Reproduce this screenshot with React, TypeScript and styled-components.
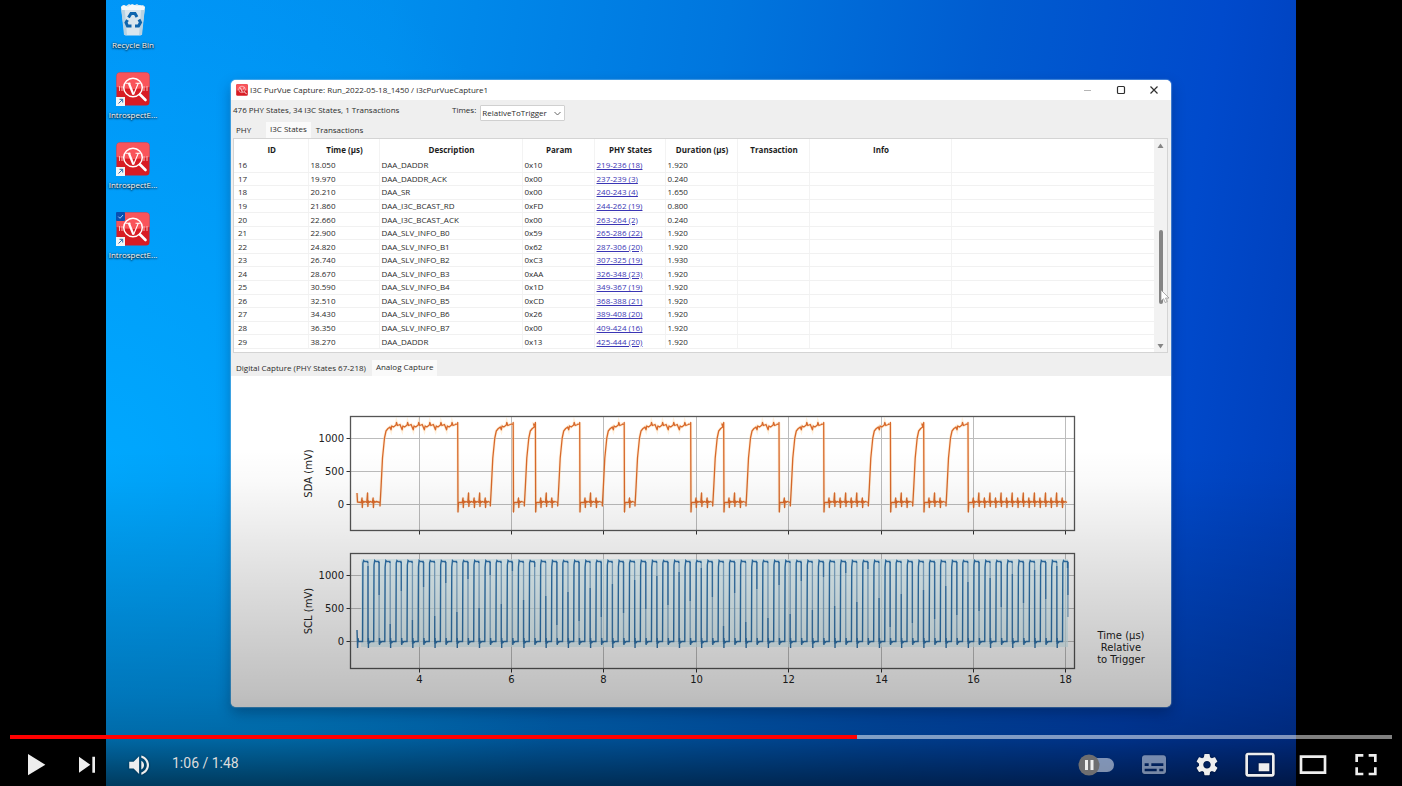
import React, { useState } from "react";
import styled, { createGlobalStyle } from "styled-components";

const GlobalStyle = createGlobalStyle`
  *, *::before, *::after { box-sizing: border-box; }
  body { margin: 0; background: #000; }
  button, select, input { font: inherit; color: inherit; margin: 0; }
`;

/* ---------- Player ---------- */

const Player = styled.main`
  position: relative;
  min-height: 100vh;
  padding: 0 106px;
  background: #000;
  overflow: hidden;
  display: flex;
`;

const Desktop = styled.div`
  flex: 1;
  min-width: 0;
  display: grid;
  grid-template-columns: 54px minmax(0, 1fr);
  column-gap: 71px;
  align-items: start;
  padding-right: 125px;
  background:
    radial-gradient(ellipse 42% 75% at 0% 60%, rgba(0, 170, 255, 0.9), rgba(0, 160, 255, 0) 100%),
    linear-gradient(98deg, #0092f6 0%, #008eee 22%, #0076de 48%, #005cd0 68%, #004acc 86%, #003cb6 100%);
  font: 8px/12px "Open Sans", "Noto Sans", sans-serif;
  color: #2b2b2b;
`;

const Shade = styled.div`
  position: absolute;
  inset: auto 0 0 0;
  height: 336px;
  pointer-events: none;
  background: linear-gradient(
    to bottom,
    rgba(0, 0, 0, 0) 0%,
    rgba(0, 0, 0, 0.02) 9%,
    rgba(0, 0, 0, 0.09) 28%,
    rgba(0, 0, 0, 0.17) 50%,
    rgba(0, 0, 0, 0.25) 73%,
    rgba(0, 0, 0, 0.32) 85%,
    rgba(0, 0, 0, 0.62) 100%
  );
`;

/* ---------- Desktop shortcuts ---------- */

const Shortcuts = styled.nav`
  display: flex;
  flex-direction: column;
`;

const Shortcut = styled.button`
  height: 70px;
  padding: 1px 0 0;
  border: 0;
  background: none;
  display: flex;
  flex-direction: column;
  align-items: center;
  gap: 2px;
  color: #fff;
  white-space: nowrap;
  text-shadow: 0 1px 2px #000, 0 0 2px rgba(0, 0, 0, 0.8);
  svg { display: block; }
`;

const AppGlyph = () => (
  <>
    <rect x="0.5" y="0.5" width="33" height="33" rx="3.5" fill="#d81c24" />
    <path d="M.5 4a3.500 3.500 0 0 1 3.500-3.500h26a3.500 3.500 0 0 1 3.500 3.500v11q-16 4-33 0z" fill="#f9545a" />
    <g stroke="#f7b9b9" strokeWidth="1" fill="none">
      <path d="M3.500 14v5M6 14v5M28 14v5M31 14v5" />
    </g>
    <circle cx="17" cy="15.500" r="9.300" fill="none" stroke="#fff" strokeWidth="1.500" />
    <path d="M9.500 11.200h5M19.500 11.200h5M22.300 11.200l-4.800 11.500" fill="none" stroke="#fff" strokeWidth="1.100" />
    <path d="M12.800 11l4.600 11.500" stroke="#fff" strokeWidth="2.200" />
    <path d="M24 22.500l5.500 5.500" stroke="#fff" strokeWidth="2.600" strokeLinecap="round" />
  </>
);

const AppShortcutIcon = ({ selected }: { selected?: boolean }) => (
  <svg width="36" height="36" viewBox="-1 -1 36 36" aria-hidden="true">
    <AppGlyph />
    <rect x="0" y="25" width="9" height="9" fill="#f4f6f8" />
    <path d="M2.500 31.500l4-4M3.500 27.300h3.200v3.200" stroke="#2a6cb0" fill="none" />
    {selected && (
      <>
        <rect x="0" y="0" width="9" height="9" rx="1" fill="#0a4fb0" />
        <path d="M2.300 4.600l1.700 1.700 3-3.300" stroke="#9fd0ff" fill="none" />
      </>
    )}
  </svg>
);

const BinIcon = () => (
  <svg width="36" height="36" viewBox="0 0 36 36" aria-hidden="true">
    <path d="M6 6l2-2 3 1 3-2 4 2 4-2 3 2 3-1 2 2-3.500 27.500q-.200 1-1.500 1h-14q-1.300 0-1.500-1z" fill="#d9e6ee" />
    <path d="M6 6l3 28h3L9.500 5zM30 6l-3 28h-3l2.500-29z" fill="#b8d2e2" />
    <path d="M6 6l3-2 4 2 4-3 5 2 3-1 5 2-1 3H7z" fill="#f5f9fb" />
    <g fill="none" stroke="#0e65ae" strokeWidth="3">
      <path d="M13.500 16.500l2.500-4h4l2 3.500" />
      <path d="M24 18.500l1.500 3-2 3.500H20" />
      <path d="M16.500 25h-4l-1.500-3.500 1.500-2.500" />
    </g>
  </svg>
);

/* ---------- Application window ---------- */

const AppWindow = styled.section`
  margin-top: 80px;
  min-width: 0;
  border-radius: 5px;
  overflow: hidden;
  background: #efefef;
  box-shadow: 0 0 1px 1px rgba(150, 200, 240, 0.45), 0 6px 14px rgba(0, 20, 60, 0.35);
`;

const TitleBar = styled.header`
  height: 20px;
  padding: 0 10px 0 5px;
  display: flex;
  align-items: center;
  gap: 2px;
  background: #fff;
  h1 { margin: 0; flex: 1; font: inherit; }
`;

const CaptionButton = styled.button<{ $faded?: boolean }>`
  width: 14px;
  height: 14px;
  margin-left: 17px;
  padding: 0;
  border: 0;
  background: none;
  color: ${(p) => (p.$faded ? "#b5b5b5" : "#2f2f2f")};
  svg { display: block; }
`;

const ToolRow = styled.div`
  height: 21px;
  display: flex;
  align-items: flex-start;
  padding: 4px 0 0 2px;
`;

const Summary = styled.span`
  width: 219px;
  white-space: nowrap;
`;

const TimesLabel = styled.label`
  display: flex;
  gap: 4px;
  white-space: nowrap;
`;

const SelectBox = styled.span`
  position: relative;
  display: block;
  width: 85px;
  height: 16px;
  margin-top: 1px;
  select {
    appearance: none;
    width: 100%;
    height: 100%;
    padding: 0 14px 0 1px;
    border: 1px solid #d0d0d0;
    border-radius: 1px;
    background: #fff;
  }
  svg { position: absolute; right: 4px; top: 6px; pointer-events: none; }
`;

const TabRow = styled.div<{ $height: number; $gap: number }>`
  height: ${(p) => p.$height}px;
  display: flex;
  align-items: flex-end;
  gap: ${(p) => p.$gap}px;
  padding-left: 2px;
`;

const Tab = styled.button<{ $active?: boolean }>`
  height: 16px;
  min-width: 31px;
  padding: ${(p) => (p.$active ? "0 4px 2px" : "0 3px")};
  border: 0;
  background: ${(p) => (p.$active ? "#fafafa" : "transparent")};
  line-height: 14px;
  text-align: left;
  white-space: nowrap;
`;

const Pane = styled.div`
  margin: 0 3px 0 2px;
  height: 215px;
  display: flex;
  align-items: stretch;
  border: 1px solid #d4d4d4;
  background: #fff;
`;

const StateTable = styled.table`
  flex: 1;
  align-self: flex-start;
  min-width: 0;
  height: 210px;
  table-layout: fixed;
  border-collapse: collapse;
  line-height: 12px;
  th, td { padding: 0 0 0 2px; border-right: 1px solid #f3f3f3; white-space: nowrap; }
  th { height: 20px; font-weight: 700; color: #1c1c1c; padding-top: 2px; }
  td { border-bottom: 1px solid #f1f1f1; text-align: left; }
  td:first-child { padding-left: 4px; }
  th:last-child, td:last-child { border-right: 0; }
  a { color: #3a35b4; }
`;

const ScrollTrack = styled.div`
  width: 13px;
  display: flex;
  flex-direction: column;
  align-items: center;
  padding: 4px 0 3px;
  background: #f2f2f2;
  svg { display: block; }
`;

const ScrollThumb = styled.div`
  width: 4px;
  height: 74px;
  margin: 81px 0 auto;
  border-radius: 2px;
  background: #858585;
`;

const TableArea = styled.div`
  position: relative;
`;

const Pointer = styled.svg`
  position: absolute;
  right: 1px;
  top: 151px;
`;

const Plot = styled.svg`
  display: block;
  width: 100%;
  height: auto;
  background: #fff;
  font: 10px "DejaVu Sans", sans-serif;
`;

type Row = [string, string, string, string, string, string];

const rows: Row[] = [
  ["16", "18.050", "DAA_DADDR", "0x10", "219-236 (18)", "1.920"],
  ["17", "19.970", "DAA_DADDR_ACK", "0x00", "237-239 (3)", "0.240"],
  ["18", "20.210", "DAA_SR", "0x00", "240-243 (4)", "1.650"],
  ["19", "21.860", "DAA_I3C_BCAST_RD", "0xFD", "244-262 (19)", "0.800"],
  ["20", "22.660", "DAA_I3C_BCAST_ACK", "0x00", "263-264 (2)", "0.240"],
  ["21", "22.900", "DAA_SLV_INFO_B0", "0x59", "265-286 (22)", "1.920"],
  ["22", "24.820", "DAA_SLV_INFO_B1", "0x62", "287-306 (20)", "1.920"],
  ["23", "26.740", "DAA_SLV_INFO_B2", "0xC3", "307-325 (19)", "1.930"],
  ["24", "28.670", "DAA_SLV_INFO_B3", "0xAA", "326-348 (23)", "1.920"],
  ["25", "30.590", "DAA_SLV_INFO_B4", "0x1D", "349-367 (19)", "1.920"],
  ["26", "32.510", "DAA_SLV_INFO_B5", "0xCD", "368-388 (21)", "1.920"],
  ["27", "34.430", "DAA_SLV_INFO_B6", "0x26", "389-408 (20)", "1.920"],
  ["28", "36.350", "DAA_SLV_INFO_B7", "0x00", "409-424 (16)", "1.920"],
  ["29", "38.270", "DAA_DADDR", "0x13", "425-444 (20)", "1.920"],
];

const columns: [string, number | undefined][] = [
  ["ID", 74],
  ["Time (µs)", 71],
  ["Description", 143],
  ["Param", 72],
  ["PHY States", 71],
  ["Duration (µs)", 72],
  ["Transaction", 72],
  ["Info", 142],
  ["", undefined],
];

/* ---------- Waveforms ---------- */

const PERIOD = 11.11;
const T0 = 126;
const T_END = 836;

// Rising and falling edges of each SDA pulse, in plot coordinates.
const pulses: [number, number][] = [
  [149, 227], [259.3, 282.5], [293.3, 304.7], [326.7, 349], [371.3, 393.5], [404, 460],
  [481.7, 493], [515, 548.3], [559.3, 593], [637.3, 659.7], [681.7, 693], [715, 737.3],
];

function lowNoise(from: number, to: number) {
  let d = "";
  let i = 0;
  for (let x = from + 5; x < to - 2; x += PERIOD / 2, i++) {
    const up = i % 2 ? 117 : 122;
    const down = i % 2 ? 130.5 : 131.5;
    d += `L${x - 0.8} 126.500L${x} ${up}L${x + 0.3} ${down}L${x + 0.8} 125L${x + 2} 126.300L${x + 3} 125.500`;
  }
  return d + `L${to} 126.500`;
}

function sdaPath() {
  let d = `M${T0} 117L${T0 + 0.5} 126`;
  let x = T0;
  pulses.forEach(([rise, fall]) => {
    d += lowNoise(x, rise);
    d += `L${rise} 130L${rise + 1} 112L${rise + 2.500} 82L${rise + 4.500} 62L${rise + 6} 55L${rise + 8} 52.500L${Math.min(rise + 10, fall - 0.5)} 51`;
    for (let r = rise + 11; r < fall - 3; r += PERIOD) {
      d += `L${r} 53.800L${r + 0.8} 50L${r + 2.500} 51L${r + 5} 49`;
      if (r + 9 < fall) d += `L${r + 5.500} 46.500L${r + 6.500} 49.500L${r + 9} 48.500`;
    }
    d += `L${fall - 2} 48L${fall - 0.5} 48.500L${fall - 0.3} 46.500L${fall} 136L${fall + 0.5} 126.500`;
    x = fall;
  });
  return d + lowNoise(x, T_END);
}

const clocks = Array.from({ length: 64 }, (_, k) => 131.600 + k * PERIOD);

function sclPath() {
  let d = `M${T0} 254L${T0 + 0.6} 272L${T0 + 1} 262L${T0 + 1.500} 265.500`;
  clocks.forEach((x, k) => {
    const last = k === clocks.length - 1;
    d += `H${x}L${x + 0.3} ${187 + (k % 3) * 2}L${x + 1} 184.500L${x + 2} 185.500H${x + 5}V${last ? 192 : 187}`;
    if (!last) {
      d += `M${x + 5.800} ${272 - (k % 2) * 3}V262M${x + 5.800} 264L${x + 7} 266.500L${x + 8} 265.500`;
    }
  });
  return d;
}

const fallPath = clocks.map((x, k) => `M${x + 5.400} 186V${k === 63 ? 241 : 268}`).join("");
const fallAccent = clocks
  .map((x, k) => {
    const y = 190 + ((k * 29) % 62);
    return k % 2 ? `M${x + 5.400} 186V${y}` : `M${x + 5.400} ${y}V266`;
  })
  .join("");

const xTicks = [4, 6, 8, 10, 12, 14, 16, 18];
const xPos = (v: number) => Math.round(188.500 + (v - 4) * 46.200) - 0.5;

const Axes = ({ top, height, zero, label, numbers }: {
  top: number; height: number; zero: number; label: string; numbers?: boolean;
}) => (
  <g>
    <g stroke="#bcbcbc">
      {xTicks.map((v) => <path key={v} d={`M${xPos(v)} ${top}v${height}`} />)}
      {[0, 1, 2].map((i) => <path key={i} d={`M119.500 ${zero - i * 33}H843.500`} />)}
    </g>
    <g stroke="#333">
      {xTicks.map((v) => <path key={v} d={`M${xPos(v)} ${top + height}v4`} />)}
      {[0, 1, 2].map((i) => <path key={i} d={`M115.500 ${zero - i * 33}h4`} />)}
    </g>
    <g fill="#222">
      {["0", "500", "1000"].map((t, i) => (
        <text key={t} x="113" y={zero - i * 33 + 3} textAnchor="end">{t}</text>
      ))}
      {numbers && xTicks.map((v) => (
        <text key={v} x={xPos(v)} y={top + height + 14} textAnchor="middle">{v}</text>
      ))}
      <text transform={`translate(81 ${top + height / 2}) rotate(-90)`} textAnchor="middle">{label}</text>
    </g>
  </g>
);

const Frame = ({ top, height }: { top: number; height: number }) => (
  <rect x="119.500" y={top} width="724" height={height} fill="none" stroke="#555" strokeWidth="1.300" />
);

const Waveforms = () => (
  <Plot viewBox="0 0 940 331" role="img" aria-label="SDA and SCL analog capture">
    <Axes top={40.500} height={114} zero={128.500} label="SDA (mV)" />
    <path d={sdaPath()} fill="none" stroke="#ffd9a8" strokeWidth="3" opacity="0.4" />
    <path d={sdaPath()} fill="none" stroke="#d8692b" strokeWidth="1.300" strokeLinejoin="round" />
    <Frame top={40.500} height={114} />
    <Axes top={177.500} height={115} zero={265.500} label="SCL (mV)" numbers />
    <rect x="130" y="183" width="707" height="88" fill="#d4eef4" opacity="0.65" />
    <path d={fallPath} fill="none" stroke="#82abcb" strokeWidth="1.300" />
    <path d={fallAccent} fill="none" stroke="#3c79ae" strokeWidth="1.300" />
    <path d={sclPath()} fill="none" stroke="#2f72aa" strokeWidth="1.400" />
    <Frame top={177.500} height={115} />
    <g fill="#222" textAnchor="middle">
      <text x="890" y="263">Time (µs)</text>
      <text x="890" y="275">Relative</text>
      <text x="890" y="287">to Trigger</text>
    </g>
  </Plot>
);

/* ---------- Player controls ---------- */

const Controls = styled.div`
  position: absolute;
  inset: auto 0 0 0;
  color: #eee;
`;

const Seek = styled.input`
  appearance: none;
  display: block;
  width: calc(100% - 20px);
  height: 4px;
  margin: 0 10px;
  background: linear-gradient(to right, #f00 var(--played), rgba(255, 255, 255, 0.5) var(--played));
  &::-webkit-slider-thumb { appearance: none; width: 0; height: 4px; }
`;

const ButtonRow = styled.div`
  display: flex;
  align-items: center;
  padding: 3px 14px 0;
`;

const LeftGroup = styled.div`
  flex: 1;
  display: flex;
  align-items: center;
  gap: 7px;
`;

const RightGroup = styled.div`
  display: flex;
  align-items: center;
  gap: 9px;
`;

const IconButton = styled.button<{ $dim?: boolean }>`
  width: 44px;
  height: 44px;
  padding: 0;
  border: 0;
  background: none;
  opacity: ${(p) => (p.$dim ? 0.5 : 1)};
  svg { display: block; width: 44px; height: 44px; fill: currentColor; filter: drop-shadow(0 0 1px rgba(0, 0, 0, 0.5)); }
`;

const Clock = styled.span`
  padding: 0 0 2px 5px;
  font: 14px/20px Roboto, sans-serif;
  color: #ddd;
  white-space: nowrap;
`;

const Autoplay = styled.label`
  position: relative;
  width: 52px;
  height: 44px;
  display: block;
  input { position: absolute; inset: 0; width: 100%; height: 100%; opacity: 0; }
  svg { display: block; }
`;

const ControlIcon = ({ d, viewBox = "1.5 1 33 33" }: { d: string; viewBox?: string }) => (
  <svg viewBox={viewBox} aria-hidden="true"><path fillRule="evenodd" d={d} /></svg>
);

const icons = {
  play: "M12 26l13-8-13-8z",
  next: "M12 24l8.500-6L12 12zM22 12v12h2V12z",
  volume:
    "M8 21h4l5 5V10l-5 5H8zM19 14v8c1.480-.680 2.500-2.230 2.500-4 0-1.740-1.020-3.260-2.500-4zM19 11.290c2.890.860 5 3.540 5 6.710s-2.110 5.850-5 6.710v2.060c4.010-.910 7-4.490 7-8.770s-2.990-7.860-7-8.770z",
  subtitles:
    "M11 11c-1.100 0-2 .9-2 2v10c0 1.100.9 2 2 2h14c1.100 0 2-.9 2-2V13c0-1.100-.9-2-2-2zM11 17h3v2h-3zM20 23h-9v-2h9zM25 23h-3v-2h3zM25 19h-9v-2h9z",
  settings:
    "m23.94,18.78c.03,-.25 .05,-.51 .05,-.78 0,-.27 -.02,-.52 -.05,-.78l1.68,-1.32c.15,-.12 .19,-.33 .09,-.51l-1.6,-2.76c-.09,-.17 -.31,-.24 -.48,-.17l-1.99,.8c-.41,-.32 -.86,-.58 -1.35,-.78l-.30,-2.12c-.02,-.19 -.19,-.33 -.39,-.33l-3.2,0c-.2,0 -.36,.14 -.39,.33l-.30,2.12c-.48,.2 -.93,.47 -1.35,.78l-1.99,-.8c-.18,-.07 -.39,0 -.48,.17l-1.6,2.76c-.10,.17 -.05,.39 .09,.51l1.68,1.32c-.03,.25 -.05,.52 -.05,.78 0,.26 .02,.52 .05,.78l-1.68,1.32c-.15,.12 -.19,.33 -.09,.51l1.6,2.76c.09,.17 .31,.24 .48,.17l1.99,-.8c.41,.32 .86,.58 1.35,.78l.30,2.12c.02,.19 .19,.33 .39,.33l3.2,0c.2,0 .36,-.14 .39,-.33l.30,-2.12c.48,-.2 .93,-.47 1.35,-.78l1.99,.8c.18,.07 .39,0 .48,-.17l1.6,-2.76c.09,-.17 .05,-.39 -.09,-.51l-1.68,-1.32zm-5.94,2.01c-1.54,0 -2.8,-1.25 -2.8,-2.8 0,-1.54 1.25,-2.8 2.8,-2.8 1.54,0 2.8,1.25 2.8,2.8 0,1.54 -1.25,2.8 -2.8,2.8z",
  mini:
    "M25 17h-8v6h8zM29 25V11c0-1.100-.9-2-2-2H9c-1.100 0-2 .9-2 2v14c0 1.100.9 2 2 2h18c1.100 0 2-.9 2-2zM27 25H9V11h18z",
  theater: "M28 11v14H8V11zM10 13h16v10H10z",
  full:
    "M10 16h2v-4h4v-2h-6zM20 10v2h4v4h2v-6zM24 24h-4v2h6v-6h-2zM12 20h-2v6h6v-2h-4z",
};

export default function App() {
  const [position, setPosition] = useState(66.200);
  const duration = 108;
  const played = (position / duration) * 100;

  return (
    <>
      <GlobalStyle />
      <Player>
        <Desktop>
          <Shortcuts aria-label="Desktop shortcuts">
            <Shortcut><BinIcon />Recycle Bin</Shortcut>
            <Shortcut><AppShortcutIcon />IntrospectE...</Shortcut>
            <Shortcut><AppShortcutIcon />IntrospectE...</Shortcut>
            <Shortcut><AppShortcutIcon selected />IntrospectE...</Shortcut>
          </Shortcuts>

          <AppWindow>
            <TitleBar>
              <svg width="12" height="12" viewBox="0 0 34 34" aria-hidden="true"><AppGlyph /></svg>
              <h1>I3C PurVue Capture: Run_2022-05-18_1450 / i3cPurVueCapture1</h1>
              <CaptionButton $faded aria-label="Minimize">
                <svg width="14" height="14"><path d="M3 7.500h7" stroke="currentColor" /></svg>
              </CaptionButton>
              <CaptionButton aria-label="Maximize">
                <svg width="14" height="14"><rect x="3.500" y="3.500" width="7" height="7" rx="1" fill="none" stroke="currentColor" strokeWidth="1.200" /></svg>
              </CaptionButton>
              <CaptionButton aria-label="Close">
                <svg width="14" height="14"><path d="M3.500 3.500l7 7M10.500 3.500l-7 7" stroke="currentColor" strokeWidth="1.200" /></svg>
              </CaptionButton>
            </TitleBar>

            <ToolRow>
              <Summary>476 PHY States, 34 I3C States, 1 Transactions</Summary>
              <TimesLabel>
                Times:
                <SelectBox>
                  <select defaultValue="RelativeToTrigger">
                    <option>RelativeToTrigger</option>
                  </select>
                  <svg width="7" height="5" aria-hidden="true"><path d="M.5 1l3 3 3-3" fill="none" stroke="#666" /></svg>
                </SelectBox>
              </TimesLabel>
            </ToolRow>

            <TabRow $height={17} $gap={2} role="tablist">
              <Tab role="tab">PHY</Tab>
              <Tab role="tab" aria-selected $active>I3C States</Tab>
              <Tab role="tab">Transactions</Tab>
            </TabRow>

            <TableArea>
              <Pane>
                <StateTable>
                  <colgroup>
                    {columns.map(([name, width]) => <col key={name} width={width} />)}
                  </colgroup>
                  <thead>
                    <tr>{columns.map(([name]) => <th key={name} scope="col">{name}</th>)}</tr>
                  </thead>
                  <tbody>
                    {rows.map(([id, time, description, param, phy, length]) => (
                      <tr key={id}>
                        <td>{id}</td>
                        <td>{time}</td>
                        <td>{description}</td>
                        <td>{param}</td>
                        <td><a href="#phy">{phy}</a></td>
                        <td>{length}</td>
                        <td /><td /><td />
                      </tr>
                    ))}
                  </tbody>
                </StateTable>
                <ScrollTrack>
                  <svg width="7" height="6" aria-hidden="true"><path d="M3.500 0.500L6.500 5h-6z" fill="#858585" /></svg>
                  <ScrollThumb />
                  <svg width="7" height="6" aria-hidden="true"><path d="M3.500 5.500L6.500 1h-6z" fill="#858585" /></svg>
                </ScrollTrack>
              </Pane>
              <Pointer width="10" height="15" viewBox="0 0 10 15" aria-hidden="true">
                <path d="M1 1v11l2.500-2.300 1.700 3.800 2-.9-1.700-3.600H9z" fill="#fff" stroke="#8a8a8a" strokeWidth="0.700" />
              </Pointer>
            </TableArea>

            <TabRow $height={23} $gap={3} role="tablist">
              <Tab role="tab">Digital Capture (PHY States 67-218)</Tab>
              <Tab role="tab" aria-selected $active>Analog Capture</Tab>
            </TabRow>
            <Waveforms />
          </AppWindow>
        </Desktop>

        <Shade />

        <Controls>
          <Seek
            type="range"
            aria-label="Seek"
            min={0}
            max={duration}
            step={0.1}
            value={position}
            onChange={(e) => setPosition(Number(e.target.value))}
            style={{ "--played": `${played}%` } as React.CSSProperties}
          />
          <ButtonRow>
            <LeftGroup>
              <IconButton aria-label="Play"><ControlIcon d={icons.play} /></IconButton>
              <IconButton aria-label="Next"><ControlIcon d={icons.next} /></IconButton>
              <IconButton aria-label="Mute"><ControlIcon d={icons.volume} viewBox="-4 -3 40 40" /></IconButton>
              <Clock>1:06 / 1:48</Clock>
            </LeftGroup>
            <RightGroup>
              <Autoplay>
                <input type="checkbox" aria-label="Autoplay" />
                <svg width="52" height="44" aria-hidden="true">
                  <rect x="13" y="16" width="30" height="14" rx="7" fill="#fff" opacity="0.5" />
                  <circle cx="18" cy="23" r="10.500" fill="#6e6e70" />
                  <path d="M14 18h3v10h-3zM19.500 18h3v10h-3z" fill="#eee" />
                </svg>
              </Autoplay>
              <IconButton $dim aria-label="Subtitles"><ControlIcon d={icons.subtitles} /></IconButton>
              <IconButton aria-label="Settings"><ControlIcon d={icons.settings} /></IconButton>
              <IconButton aria-label="Miniplayer"><ControlIcon d={icons.mini} /></IconButton>
              <IconButton aria-label="Theater mode"><ControlIcon d={icons.theater} /></IconButton>
              <IconButton aria-label="Full screen"><ControlIcon d={icons.full} /></IconButton>
            </RightGroup>
          </ButtonRow>
        </Controls>
      </Player>
    </>
  );
}
